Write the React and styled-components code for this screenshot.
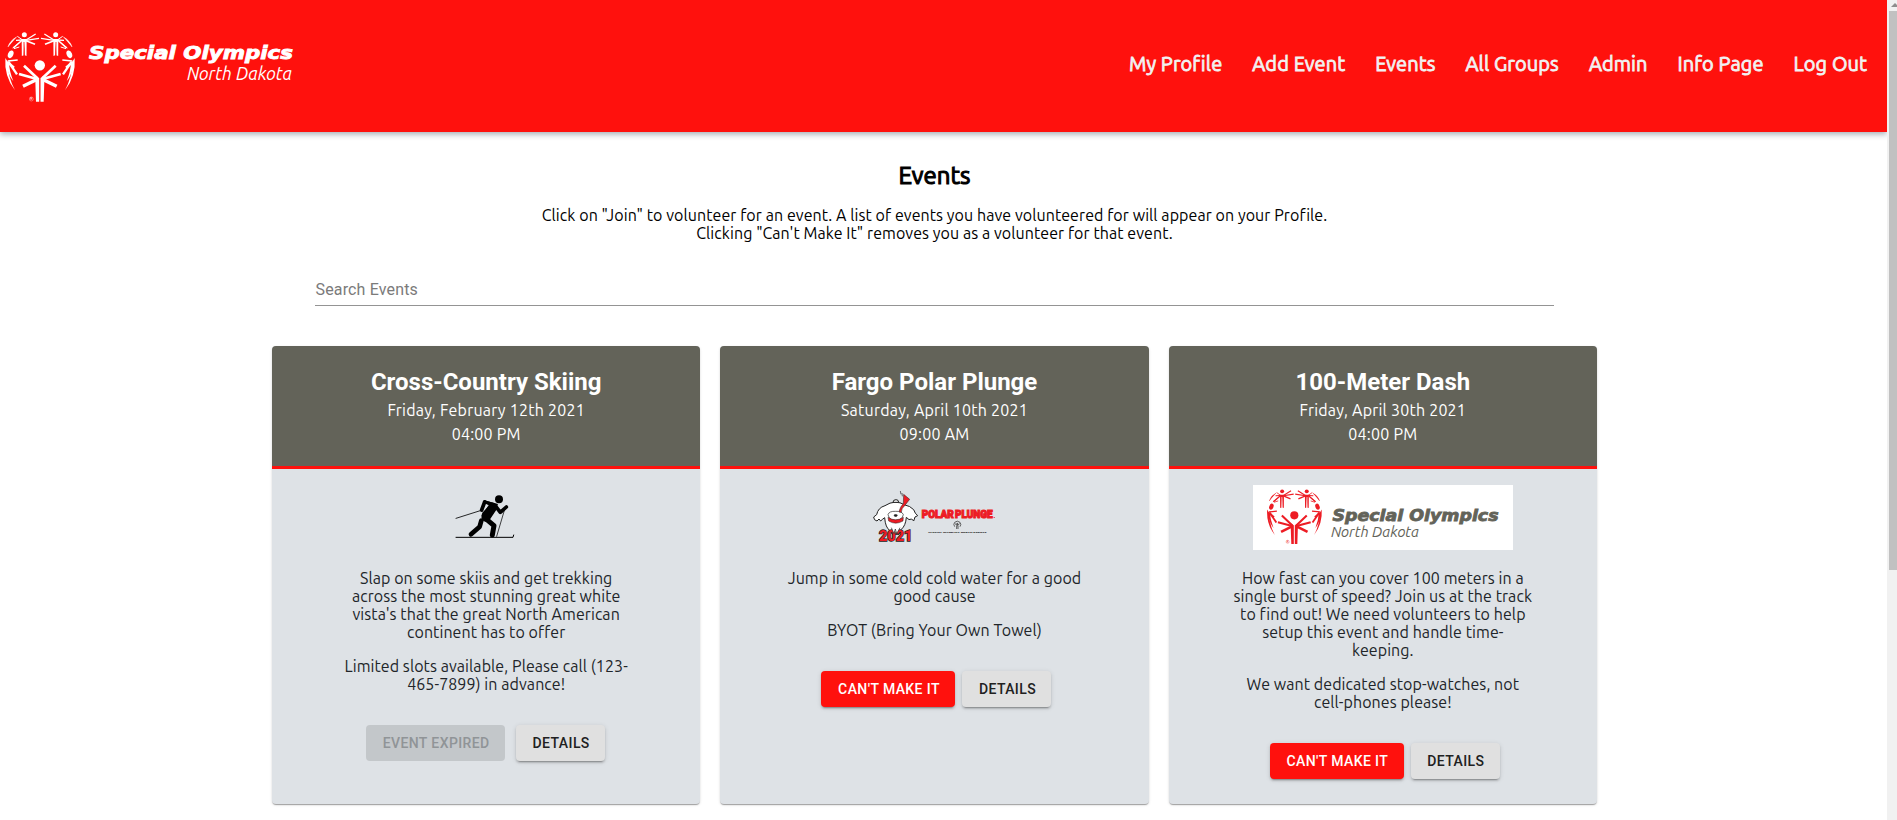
import React from "react";
import styled, { createGlobalStyle } from "styled-components";

const RED = "#ff110d";
const BODY_FONT = `Ubuntu, "Noto Sans", sans-serif`;
const UI_FONT = `Roboto, "Liberation Sans", sans-serif`;

const GlobalStyle = createGlobalStyle`
  * { box-sizing: border-box; }
  body { margin: 0; background: #fff; font-family: ${BODY_FONT}; overflow: hidden; }
  h1, h2, p { margin: 0; }
  svg { overflow: visible; }
`;

const Shell = styled.div`
  display: flex;
  height: 820px;
  overflow: hidden;
`;

const Page = styled.div`
  flex: 1;
  min-width: 0;
`;

const Header = styled.header`
  display: flex;
  justify-content: space-between;
  height: 132px;
  padding-right: 20px;
  background: ${RED};
  box-shadow: 0 2px 6px rgba(20, 40, 60, 0.4);
`;

const Nav = styled.nav`
  display: flex;
  gap: 30px;
  padding-top: 50px;
`;

const NavLink = styled.a`
  font-size: 20px;
  line-height: 28px;
  font-weight: 400;
  letter-spacing: 0.1px;
  -webkit-text-stroke: 0.8px #f2f2f2;
  color: #f2f2f2;
  white-space: nowrap;
`;

const Main = styled.main`
  width: 1325px;
  margin-left: 272px;
`;

const Intro = styled.section`
  padding-top: 28px;
  text-align: center;
  color: #000;
`;

const PageTitle = styled.h1`
  font-size: 24px;
  line-height: 32px;
  font-weight: 400;
  letter-spacing: 0.1px;
  -webkit-text-stroke: 1.1px #000;
`;

const IntroText = styled.div`
  padding-top: 14px;
`;

const Line = styled.span`
  display: block;
  font-size: 16px;
  line-height: 18px;
  letter-spacing: 0.07px;
  white-space: nowrap;
`;

const Search = styled.div`
  margin: 30px 43px 0;
  height: 34px;
  padding: 7px 0 0 0.5px;
  border-bottom: 1px solid #949494;
  font: 400 16px/22px ${UI_FONT};
  letter-spacing: 0.15px;
  color: #7b7b7b;
`;

const CardGrid = styled.div`
  display: grid;
  grid-template-columns: repeat(3, 1fr);
  gap: 20px;
  margin-top: 40px;
  height: 458px;
`;

const Card = styled.article`
  display: flex;
  flex-direction: column;
  border-radius: 4px;
  background: #dee2e6;
  text-align: center;
  color: #212529;
  box-shadow: 0 2px 1px -1px rgba(0, 0, 0, 0.2), 0 1px 1px rgba(0, 0, 0, 0.14),
    0 1px 3px rgba(0, 0, 0, 0.12);
`;

const CardHeader = styled.div`
  height: 123px;
  padding-top: 20px;
  background: #636359;
  border-bottom: 3px solid ${RED};
  border-radius: 4px 4px 0 0;
  color: #fff;
`;

const CardTitle = styled.h2`
  font: 700 24px/32px ${UI_FONT};
`;

const CardMeta = styled.div`
  font-size: 16px;
  line-height: 24px;
  letter-spacing: 0.22px;
`;

const Picture = styled.div`
  display: flex;
  justify-content: center;
  height: 65px;
  margin-top: 16px;
`;

const Description = styled.div`
  padding-top: 19px;
`;

const Paragraph = styled.p`
  & + & { margin-top: 16px; }
`;

const Actions = styled.div`
  display: flex;
  justify-content: center;
  gap: ${(p) => p.$gap}px;
  margin-top: 32px;
  padding-left: ${(p) => (p.$gap > 10 ? 0 : 4)}px;
  padding-right: ${(p) => (p.$gap > 10 ? 1 : 0)}px;
`;

const Button = styled.button`
  height: 36px;
  width: ${(p) => p.$w}px;
  padding: 0 0 0 1px;
  border: 0;
  border-radius: 4px;
  font: 500 14px/36px ${UI_FONT};
  letter-spacing: 0.4px;
  color: ${(p) => ({ danger: "#fff", disabled: "#909497", plain: "#212121" })[p.$kind]};
  background: ${(p) => ({ danger: RED, disabled: "#c3c7ca", plain: "#e0e0e0" })[p.$kind]};
  box-shadow: ${(p) =>
    p.$kind === "disabled"
      ? "none"
      : "0 3px 1px -2px rgba(0,0,0,.2), 0 2px 2px rgba(0,0,0,.14), 0 1px 5px rgba(0,0,0,.12)"};
`;

const ScrollTrack = styled.div`
  width: 10px;
  padding: 3px 0 0 2px;
  background: #f1f1f1;
  overflow: hidden;
`;

const ScrollArrow = styled.div`
  margin-left: 2px;
  width: 0;
  border: 4px solid transparent;
  border-top: 0;
  border-bottom: 4px solid #8d8d8d;
`;

const ScrollThumb = styled.div`
  margin-top: 4px;
  height: 559px;
  background: #c1c1c1;
`;

function TopFigure() {
  return (
    <g>
      <circle cx="73" cy="20.500" r="7.500" stroke="none" />
      <path d="M65 33 L80 33 L79.500 84 L74.500 82 L73 44 L71 82 L65.500 84 Z" stroke="none" />
      <path d="M72 42V82" stroke="var(--back)" strokeWidth="2.500" />
      <path d="M78 36 L107 18" strokeWidth="4" />
      <path d="M78 37 L117 31" strokeWidth="4" />
      <path d="M78 38 L105 49" strokeWidth="5" />
      <path d="M68 36 L48 37" strokeWidth="4" />
      <path d="M68 36 L52 25" strokeWidth="3" />
      <path d="M67 36 L40 60" strokeWidth="5" />
      <path d="M50 27 Q30 38 24 57" strokeWidth="2" />
    </g>
  );
}

function SideFigure() {
  return (
    <g>
      <ellipse cx="32" cy="79" rx="8" ry="12" transform="rotate(22 32 79)" stroke="none" />
      <path d="M23 99 L53 96" strokeWidth="5" />
      <path d="M25 101 L51 139" strokeWidth="7" />
      <path d="M24 103 L42 119" strokeWidth="7" />
      <path d="M19 98 L27 103 Q28 130 40 160 Q20 135 19 98 Z" stroke="none" />
      <path d="M16 90 Q12 145 45 187 Q24 148 22 100 Z" stroke="none" />
      <path d="M42 62 L58 57" strokeWidth="3" />
      <path d="M38 60 L55 47" strokeWidth="3" />
    </g>
  );
}

/* Globe made of five figures with raised arms, on a 240 x 234 canvas. */
function Emblem({ color, back }) {
  return (
    <g fill={color} stroke={color} style={{ "--back": back }}>
      <TopFigure />
      <g transform="translate(240 0) scale(-1 1)"><TopFigure /></g>
      <SideFigure />
      <g transform="translate(240 0) scale(-1 1)"><SideFigure /></g>
      <circle cx="119.500" cy="112" r="15.500" stroke="none" />
      <path d="M107 143 L117.500 150 L117.500 221 L108 221 L106 160 Z" stroke="none" />
      <path d="M132 143 L121.500 150 L121.500 221 L131 221 L133 160 Z" stroke="none" />
      <path d="M112 151 L72 113 M127 151 L167 113" strokeWidth="8" />
      <path d="M111 153 L57 138 M128 153 L182 138" strokeWidth="8" />
      <path d="M109 155 L69 175 M130 155 L170 175" strokeWidth="10" />
      <circle cx="94" cy="213" r="6" fill="none" strokeWidth="1.300" opacity="0.8" />
      <text x="94" y="217" fontSize="10" textAnchor="middle" stroke="none" fontFamily="Roboto">R</text>
    </g>
  );
}

const LogoName = styled.text`
  font-family: "DejaVu Sans", sans-serif;
  font-style: italic;
  font-weight: 700;
`;

const LogoPlace = styled.text`
  font-family: ${BODY_FONT};
  font-style: italic;
  font-weight: 400;
`;

function HeaderLogo() {
  return (
    <svg width="310" height="132" viewBox="0 0 310 132">
      <g transform="translate(0 28) scale(0.33333)"><Emblem color="#fff" back={RED} /></g>
      <g fill="#fff">
        <LogoName x="89" y="59" fontSize="18.500" textLength="204" lengthAdjust="spacingAndGlyphs" stroke="#fff" strokeWidth="0.9">Special Olympics</LogoName>
        <LogoPlace x="187" y="80" fontSize="18.500" textLength="105" lengthAdjust="spacingAndGlyphs">North Dakota</LogoPlace>
      </g>
    </svg>
  );
}

function ChapterLogo() {
  return (
    <svg width="260" height="65" viewBox="0 0 260 65">
      <rect width="260" height="65" fill="#fff" />
      <g transform="translate(10 1) scale(0.262)"><Emblem color="#ed1c24" back="#fff" /></g>
      <g fill="#636359">
        <LogoName x="79.500" y="35.500" fontSize="15" textLength="166" lengthAdjust="spacingAndGlyphs" stroke="#636359" strokeWidth="0.8">Special Olympics</LogoName>
        <LogoPlace x="78" y="52" fontSize="15" textLength="88" lengthAdjust="spacingAndGlyphs">North Dakota</LogoPlace>
      </g>
    </svg>
  );
}

function Skier() {
  return (
    <svg width="90" height="65" viewBox="3 15 270 195">
      <g fill="none" stroke="#000" strokeLinecap="round" strokeLinejoin="round">
        <circle cx="177" cy="58" r="12" fill="#000" stroke="none" />
        <path d="M128 66 Q131 60 138 62 L174 72 L168 88 L143 124 L124 108 L127 98 L148 76 Z" fill="#000" stroke="none" />
        <path d="M134 66 L125 90" strokeWidth="11" />
        <path d="M135 66 L160 74" strokeWidth="10" />
        <path d="M168 80 L181 97 L199 81" strokeWidth="11" />
        <path d="M158 82 L138 112" strokeWidth="27" />
        <path d="M137 116 L162 137 L157 165" strokeWidth="15" />
        <path d="M124 122 L119 140 L93 163" strokeWidth="14" />
        <path d="M127 90 L48 115" strokeWidth="2.500" />
        <path d="M194 88 L170 169" strokeWidth="2.200" />
        <path d="M48 172 H219 L221 165" strokeWidth="3" />
      </g>
    </svg>
  );
}

function PolarPlunge() {
  return (
    <svg width="122" height="65" viewBox="70 30 366 195">
      <g stroke="#222" strokeWidth="3" fill="#fff" strokeLinejoin="round">
        <path d="M106 92 Q85 98 81 119 L72 126 Q72 136 82 138 L88 132 L93 138 Q99 132 105 128 Q107 158 121 167 L128 178 L148 178 L155 163 Q168 152 170 127 Q178 138 186 132 L192 138 L196 126 L204 122 Q196 116 192 104 Q180 92 166 90 Q136 72 106 92 Z" />
        <path d="M130 82 Q130 74 139 74 Q147 74 147 82 Z" />
        <path d="M115 119 Q118 108 138 109 Q157 108 161 119 Q157 136 138 136 Q119 136 115 119 Z" strokeWidth="2" />
      </g>
      <path d="M115 127 Q137 142 161 127 L160 138 Q138 151 117 138 Z" fill="#ed1c24" stroke="#222" strokeWidth="1.500" />
      <path d="M148 111 Q151 94 161 86 L162 58 L180 73 L165 92 Q155 100 155 112 Z" fill="#ed1c24" stroke="#222" strokeWidth="1.500" />
      <path d="M133 120 Q138 117 143 120 Q142 125 138 124.500 Q134 125 133 120 M152 48 L154 58 M157 54 L158 64" stroke="#222" strokeWidth="2" fill="#222" />
      <g fontFamily="Roboto" fontWeight="900" fontSize="42" fill="#ed1c24" stroke="#222" strokeWidth="4" paintOrder="stroke">
        <text x="88" y="198" textLength="100" lengthAdjust="spacingAndGlyphs">2021</text>
      </g>
      <path d="M125 158 L133 176 L137 162 L141 176 L151 158" fill="#fff" stroke="#222" strokeWidth="2" />
      <text x="216" y="129" fontSize="35" wordSpacing="-5" textLength="213" lengthAdjust="spacingAndGlyphs" fontFamily="Roboto" fontWeight="900" fill="#ed1c24" stroke="#ed1c24" strokeWidth="3.500">POLAR PLUNGE</text>
      <rect x="432" y="126" width="3" height="3" fill="#ed1c24" />
      <g fill="none" stroke="#444" strokeWidth="2.500">
        <path d="M315 155 Q310 148 315 142 Q323 135 331 142 Q336 148 331 155 M316 146 L323 152 L330 146 M321 152 V162 M325 152 V162" />
        <circle cx="323" cy="147" r="2" fill="#444" />
      </g>
      <text x="235" y="173" fontSize="7.500" textLength="176" lengthAdjust="spacingAndGlyphs" fontFamily="Roboto" fontWeight="900" fill="#222">SPECIAL OLYMPICS NORTH DAKOTA</text>
    </svg>
  );
}

const NAV = ["My Profile", "Add Event", "Events", "All Groups", "Admin", "Info Page", "Log Out"];

const EVENTS = [
  {
    title: "Cross-Country Skiing",
    date: "Friday, February 12th 2021",
    time: "04:00 PM",
    picture: <Skier />,
    text: [
      ["Slap on some skiis and get trekking", "across the most stunning great white", "vista's that the great North American", "continent has to offer"],
      ["Limited slots available, Please call (123-", "465-7899) in advance!"],
    ],
    action: { label: "Event Expired", kind: "disabled", w: 139, gap: 11 },
  },
  {
    title: "Fargo Polar Plunge",
    date: "Saturday, April 10th 2021",
    time: "09:00 AM",
    picture: <PolarPlunge />,
    text: [
      ["Jump in some cold cold water for a good", "good cause"],
      ["BYOT (Bring Your Own Towel)"],
    ],
    action: { label: "Can't Make It", kind: "danger", w: 134, gap: 7 },
  },
  {
    title: "100-Meter Dash",
    date: "Friday, April 30th 2021",
    time: "04:00 PM",
    picture: <ChapterLogo />,
    text: [
      ["How fast can you cover 100 meters in a", "single burst of speed? Join us at the track", "to find out! We need volunteers to help", "setup this event and handle time-", "keeping."],
      ["We want dedicated stop-watches, not", "cell-phones please!"],
    ],
    action: { label: "Can't Make It", kind: "danger", w: 134, gap: 7 },
  },
];

function EventCard({ event }) {
  return (
    <Card>
      <CardHeader>
        <CardTitle>{event.title}</CardTitle>
        <CardMeta>{event.date}</CardMeta>
        <CardMeta>{event.time}</CardMeta>
      </CardHeader>
      <Picture>{event.picture}</Picture>
      <Description>
        {event.text.map((lines, i) => (
          <Paragraph key={i}>
            {lines.map((l) => <Line key={l}>{l}</Line>)}
          </Paragraph>
        ))}
      </Description>
      <Actions $gap={event.action.gap}>
        <Button $kind={event.action.kind} $w={event.action.w}>{event.action.label.toUpperCase()}</Button>
        <Button $kind="plain" $w={89}>DETAILS</Button>
      </Actions>
    </Card>
  );
}

export default function App() {
  return (
    <Shell>
      <GlobalStyle />
      <Page>
        <Header>
          <HeaderLogo />
          <Nav>
            {NAV.map((label) => <NavLink key={label}>{label}</NavLink>)}
          </Nav>
        </Header>
        <Main>
          <Intro>
            <PageTitle>Events</PageTitle>
            <IntroText>
              <Line>Click on "Join" to volunteer for an event. A list of events you have volunteered for will appear on your Profile.</Line>
              <Line>Clicking "Can't Make It" removes you as a volunteer for that event.</Line>
            </IntroText>
          </Intro>
          <Search>Search Events</Search>
          <CardGrid>
            {EVENTS.map((e) => <EventCard key={e.title} event={e} />)}
          </CardGrid>
        </Main>
      </Page>
      <ScrollTrack>
        <ScrollArrow />
        <ScrollThumb />
      </ScrollTrack>
    </Shell>
  );
}
